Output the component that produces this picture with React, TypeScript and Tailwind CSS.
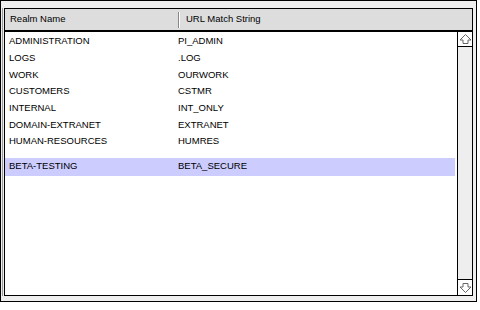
import React from "react";

const rows: [string, string, number][] = [
  ["ADMINISTRATION", "PI_ADMIN", 17],
  ["LOGS", ".LOG", 17],
  ["WORK", "OURWORK", 16],
  ["CUSTOMERS", "CSTMR", 17],
  ["INTERNAL", "INT_ONLY", 17],
  ["DOMAIN-EXTRANET", "EXTRANET", 16],
  ["HUMAN-RESOURCES", "HUMRES", 17],
];

function UpArrow() {
  return (
    <svg width="13" height="12" viewBox="0 0 13 12">
      <polygon
        points="6.5,1.5 12,7 9,7 9,10.5 4,10.5 4,7 1,7"
        fill="white"
        stroke="#666"
        strokeWidth="1"
      />
    </svg>
  );
}

function DownArrow() {
  return (
    <svg width="13" height="12" viewBox="0 0 13 12">
      <polygon
        points="6.5,10.5 12,5 9,5 9,1.5 4,1.5 4,5 1,5"
        fill="white"
        stroke="#666"
        strokeWidth="1"
      />
    </svg>
  );
}

export default function App() {
  return (
    <div
      className="w-[480px] h-[310px] bg-white"
      style={{ fontFamily: '"Liberation Sans", Arial, sans-serif' }}
    >
      <div className="w-[477px] h-[302px] border border-black bg-[#eeeeee] pt-[7px] pl-[1px]">
        <div className="w-[470px] h-[288px] border-l border-[#999999] pl-px">
          <div className="w-[469px] h-[288px] border border-black bg-white flex flex-col">
            {/* header */}
            <div className="h-[23px] bg-[#dddddd] border-b-2 border-black flex items-center text-[9.5px] text-black shrink-0">
              <div className="w-[173px] pl-[5px]">Realm Name</div>
              <div className="w-px h-[16px] bg-[#888888]" />
              <div className="w-px h-[16px] bg-white" />
              <div className="pl-[6px]">URL Match String</div>
            </div>
            {/* body */}
            <div className="flex flex-1 min-h-0">
              <div className="flex-1 flex flex-col pt-px pr-[2px] text-[9.5px] text-black">
                {rows.map(([a, b, h]) => (
                  <div
                    key={a}
                    className="flex items-center"
                    style={{ height: h }}
                  >
                    <div className="w-[173px] pl-[4px]">{a}</div>
                    <div>{b}</div>
                  </div>
                ))}
                <div className="h-[8px]" />
                <div className="flex items-center h-[18px] bg-[#ccccff] pb-[1px]">
                  <div className="w-[173px] pl-[4px]">BETA-TESTING</div>
                  <div>BETA_SECURE</div>
                </div>
              </div>
              <div className="w-[15px] border-l border-black bg-[#eeeeee] flex flex-col justify-between">
                <div className="h-[15px] border-b border-black bg-white flex items-center justify-center">
                  <UpArrow />
                </div>
                <div className="h-[16px] border-t border-black bg-white flex items-center justify-center">
                  <DownArrow />
                </div>
              </div>
            </div>
          </div>
        </div>
      </div>
    </div>
  );
}
